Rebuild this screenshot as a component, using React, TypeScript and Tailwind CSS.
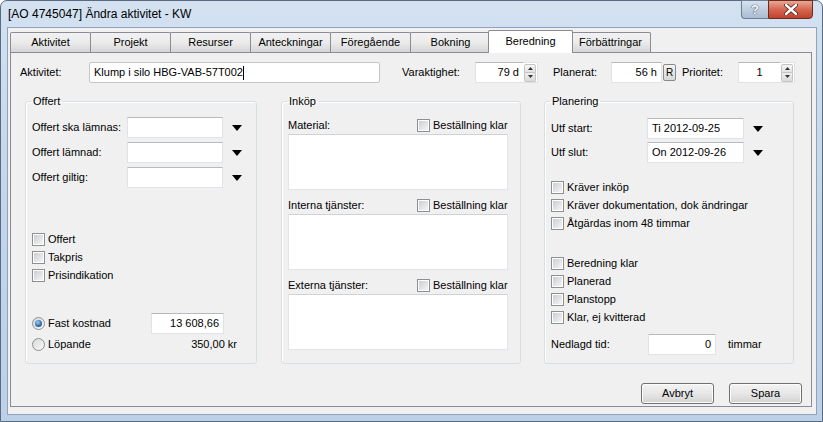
import React from "react";

const FONT = "font-['Liberation_Sans',Arial,sans-serif]";

function Check({ label, className = "" }: { label: string; className?: string }) {
  return (
    <div className={`flex h-[18px] items-center gap-[3px] ${className}`}>
      <div className="w-[13px] h-[13px] border border-[#8e8f8f] bg-white p-[1px]">
        <div className="w-full h-full bg-linear-to-br from-[#cbced3] to-[#f5f5f5]" />
      </div>
      <span>{label}</span>
    </div>
  );
}

function Radio({ checked }: { checked?: boolean }) {
  return (
    <div className="w-[13px] h-[13px] rounded-full border border-[#8e8f8f] bg-linear-to-br from-[#d4d6d9] to-[#fbfbfb] flex items-center justify-center">
      {checked ? (
        <div className="w-[7px] h-[7px] rounded-full bg-[radial-gradient(circle_at_40%_35%,#9fd0f5,#2a66a8_60%,#163f6e)]" />
      ) : null}
    </div>
  );
}

function TBox({ className = "", children }: { className?: string; children?: React.ReactNode }) {
  return (
    <div
      className={`h-[21px] bg-white border border-[#dfe3e8] border-t-[#b6b9be] flex items-center px-[4px] ${className}`}
    >
      {children}
    </div>
  );
}

function Arrow() {
  return (
    <svg width="10" height="6" viewBox="0 0 10 6" className="ml-[9px]">
      <path d="M0 0 L10 0 L5 6 Z" fill="#000" />
    </svg>
  );
}

function Spin() {
  return (
    <div className="w-[15px] h-[21px] flex flex-col justify-center gap-0 border border-[#dfe3e8] border-l-0 bg-white">
      <div className="h-[9px] mx-[1px] border border-[#c4c4c4] rounded-t-[2px] bg-linear-to-b from-[#f7f7f7] to-[#e2e2e2] flex items-center justify-center">
        <svg width="5" height="3" viewBox="0 0 5 3">
          <path d="M2.5 0 L5 3 L0 3 Z" fill="#333" />
        </svg>
      </div>
      <div className="h-[9px] mx-[1px] border border-t-0 border-[#c4c4c4] rounded-b-[2px] bg-linear-to-b from-[#eeeeee] to-[#dadada] flex items-center justify-center">
        <svg width="5" height="3" viewBox="0 0 5 3">
          <path d="M0 0 L5 0 L2.5 3 Z" fill="#333" />
        </svg>
      </div>
    </div>
  );
}

function Tab({ label, selected }: { label: string; selected?: boolean }) {
  if (selected) {
    return (
      <div className="relative z-10 -ml-[2px] -mr-[3px] -mb-[1px] w-[85px] h-[23px] border border-b-0 border-[#898c95] rounded-t-[2px] bg-white flex items-center justify-center pb-[2px]">
        {label}
      </div>
    );
  }
  return (
    <div className="-mr-[1px] w-[81px] h-[20px] border border-b-0 border-[#898c95] rounded-t-[2px] bg-linear-to-b from-[#f2f2f2] via-[#ebebeb] to-[#d6d6d6] flex items-center justify-center">
      {label}
    </div>
  );
}

function Button({ label }: { label: string }) {
  return (
    <div className="w-[73px] h-[21px] rounded-[3px] border border-[#707070] bg-linear-to-b from-[#f3f3f3] via-[#e7e7e7] to-[#d2d2d2] shadow-[inset_0_0_0_1px_#fcfcfc] flex items-center justify-center">
      {label}
    </div>
  );
}

function AreaRow({ label, mt }: { label: string; mt: string }) {
  return (
    <>
      <div className={`flex h-[16px] items-center ${mt}`}>
        <span className="w-[129px]">{label}</span>
        <Check label="Beställning klar" />
      </div>
      <div className="mt-[1px] w-[220px] h-[56px] bg-white border border-[#e2e5e9] border-t-[#cfd2d6]" />
    </>
  );
}

export default function App() {
  return (
    <div className={`w-[823px] h-[422px] bg-white text-[11px] leading-[13px] text-black ${FONT}`}>
      <div className="w-[823px] h-[422px] flex flex-col rounded-t-[7px] border border-[#5a6b80] bg-linear-to-b from-[#d3e1f1] via-[#c2d5eb] to-[#bcd0e8]">
        {/* Title bar */}
        <div className="h-[26px] flex items-start">
          <div className="pl-[7px] pt-[6px] text-[12px] leading-[14px]">[AO 4745047] Ändra aktivitet - KW</div>
          <div className="ml-auto mr-[9px] -mt-[1px] flex">
            <div className="w-[27px] h-[19px] rounded-bl-[4px] border border-[#6d7f95] border-r-0 bg-linear-to-b from-[#d7e2ee] to-[#a9bcd2] flex items-center justify-center">
              <span className="text-[13px] font-bold text-white [text-shadow:0_0_1px_#2e3f52,0_0_1px_#2e3f52]">?</span>
            </div>
            <div className="w-[45px] h-[19px] rounded-br-[4px] border border-[#6b2a1e] bg-linear-to-b from-[#e8a896] via-[#d46652] to-[#c2412b] flex items-center justify-center">
              <svg width="14" height="11" viewBox="0 0 14 11">
                <path d="M2 1 L12 10 M12 1 L2 10" stroke="#4a1a12" strokeWidth="4" strokeLinecap="round" />
                <path d="M2 1 L12 10 M12 1 L2 10" stroke="#ffffff" strokeWidth="2.4" strokeLinecap="round" />
              </svg>
            </div>
          </div>
        </div>

        {/* Client area */}
        <div className="ml-[6px] w-[810px] h-[388px] border border-[#8fa3bb] bg-[#f0f0f0] pl-[2px] pt-[2px]">
          {/* Tabs */}
          <div className="h-[22px] flex items-end">
            <Tab label="Aktivitet" />
            <Tab label="Projekt" />
            <Tab label="Resurser" />
            <Tab label="Anteckningar" />
            <Tab label="Föregående" />
            <Tab label="Bokning" />
            <Tab label="Beredning" selected />
            <Tab label="Förbättringar" />
          </div>

          {/* Tab panel */}
          <div className="w-[802px] h-[355px] border border-[#898c95] bg-[#f0f0f0] pl-[9px] pt-[9px] flex flex-col">
            {/* Row 1 */}
            <div className="flex h-[21px] items-center">
              <span className="w-[69px]">Aktivitet:</span>
              <div className="w-[291px] h-[21px] bg-white border border-[#c3c6cb] rounded-[2px] flex items-center px-[4px]">
                Klump i silo HBG-VAB-57T002<span className="w-[1px] h-[14px] bg-black" />
              </div>
              <span className="ml-[22px] w-[73px]">Varaktighet:</span>
              <TBox className="w-[48px] justify-end border-r-0">79 d</TBox>
              <Spin />
              <span className="ml-[15px] w-[58px]">Planerat:</span>
              <TBox className="w-[51px] justify-end">56 h</TBox>
              <div className="ml-[1px] w-[13px] h-[17px] rounded-[2px] border border-[#8a8a8a] bg-linear-to-b from-[#f4f4f4] to-[#d8d8d8] flex items-center justify-center text-[10px]">
                R
              </div>
              <span className="ml-[6px] w-[56px]">Prioritet:</span>
              <TBox className="w-[42px] justify-center border-r-0">1</TBox>
              <Spin />
            </div>

            {/* Group boxes */}
            <div className="flex mt-[11px] ml-[5px]">
              {/* Offert */}
              <fieldset className="w-[232px] h-[270px] border border-[#d5dfe5] rounded-[3px] shadow-[inset_1px_1px_0_#ffffff]">
                <legend className="ml-[5px] px-[2px] leading-[14px]">Offert</legend>
                <div className="pl-[6px] flex flex-col">
                  <div className="mt-[9px] flex flex-col gap-[4px]">
                    {["Offert ska lämnas:", "Offert lämnad:", "Offert giltig:"].map((l) => (
                      <div key={l} className="flex h-[21px] items-center">
                        <span className="w-[95px]">{l}</span>
                        <TBox className="w-[96px]" />
                        <Arrow />
                      </div>
                    ))}
                  </div>
                  <div className="mt-[42px] flex flex-col">
                    <Check label="Offert" />
                    <Check label="Takpris" />
                    <Check label="Prisindikation" />
                  </div>
                  <div className="mt-[29px] flex h-[21px] items-center">
                    <div className="w-[119px] flex items-center gap-[3px]">
                      <Radio checked />
                      <span>Fast kostnad</span>
                    </div>
                    <TBox className="w-[73px] justify-end">13 608,66</TBox>
                  </div>
                  <div className="flex h-[20px] items-center w-[205px]">
                    <div className="flex items-center gap-[3px]">
                      <Radio />
                      <span>Löpande</span>
                    </div>
                    <span className="ml-auto">350,00 kr</span>
                  </div>
                </div>
              </fieldset>

              {/* Inköp */}
              <fieldset className="ml-[24px] w-[240px] h-[270px] border border-[#d5dfe5] rounded-[3px] shadow-[inset_1px_1px_0_#ffffff]">
                <legend className="ml-[5px] px-[2px] leading-[14px]">Inköp</legend>
                <div className="pl-[6px] flex flex-col">
                  <AreaRow label="Material:" mt="mt-[9px]" />
                  <AreaRow label="Interna tjänster:" mt="mt-[7px]" />
                  <AreaRow label="Externa tjänster:" mt="mt-[7px]" />
                </div>
              </fieldset>

              {/* Planering */}
              <fieldset className="ml-[23px] w-[250px] h-[270px] border border-[#d5dfe5] rounded-[3px] shadow-[inset_1px_1px_0_#ffffff]">
                <legend className="ml-[5px] px-[2px] leading-[14px]">Planering</legend>
                <div className="pl-[6px] flex flex-col">
                  <div className="mt-[10px] flex flex-col gap-[3px]">
                    <div className="flex h-[21px] items-center">
                      <span className="w-[96px]">Utf start:</span>
                      <TBox className="w-[97px]">Ti 2012-09-25</TBox>
                      <Arrow />
                    </div>
                    <div className="flex h-[21px] items-center">
                      <span className="w-[96px]">Utf slut:</span>
                      <TBox className="w-[97px]">On 2012-09-26</TBox>
                      <Arrow />
                    </div>
                  </div>
                  <div className="mt-[15px] flex flex-col">
                    <Check label="Kräver inköp" />
                    <Check label="Kräver dokumentation, dok ändringar" />
                    <Check label="Åtgärdas inom 48 timmar" />
                  </div>
                  <div className="mt-[22px] flex flex-col">
                    <Check label="Beredning klar" />
                    <Check label="Planerad" />
                    <Check label="Planstopp" />
                    <Check label="Klar, ej kvitterad" />
                  </div>
                  <div className="mt-[8px] flex h-[21px] items-center">
                    <span className="w-[97px]">Nedlagd tid:</span>
                    <TBox className="w-[68px] justify-end">0</TBox>
                    <span className="ml-[12px]">timmar</span>
                  </div>
                </div>
              </fieldset>
            </div>

            {/* Buttons */}
            <div className="mt-[19px] flex justify-end gap-[15px] pr-[9px]">
              <Button label="Avbryt" />
              <Button label="Spara" />
            </div>
          </div>
        </div>
      </div>
    </div>
  );
}
